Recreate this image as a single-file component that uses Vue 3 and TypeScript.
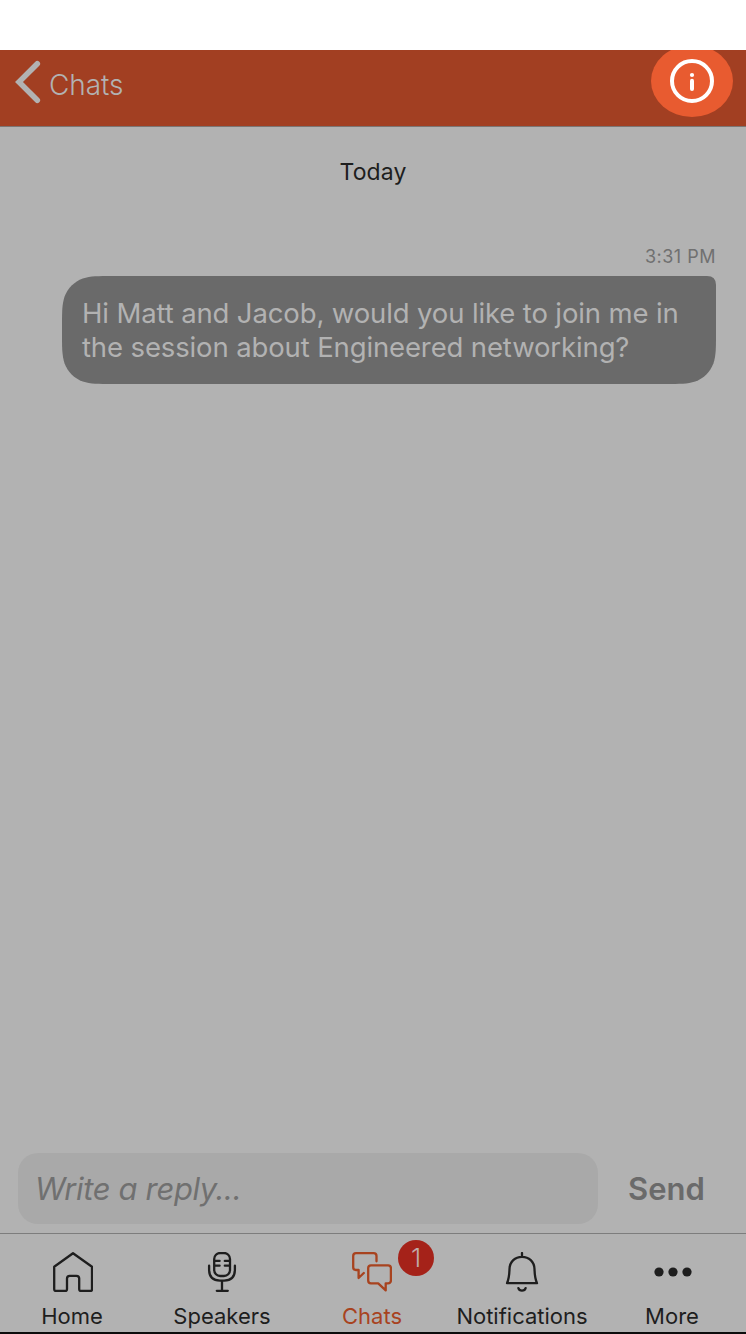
<script setup lang="ts">
import { ref } from 'vue'

interface Tab {
  id: string
  label: string
  badge?: number
}

const tabs: Tab[] = [
  { id: 'home', label: 'Home' },
  { id: 'speakers', label: 'Speakers' },
  { id: 'chats', label: 'Chats', badge: 1 },
  { id: 'notifications', label: 'Notifications' },
  { id: 'more', label: 'More' },
]
const active = ref('chats')
const reply = ref('')
</script>

<template>
  <div class="screen">
    <header class="header">
      <button class="back">
        <svg class="chevron" width="28" height="46" viewBox="0 0 28 46">
          <path d="M23.3 4.8 L5 23 L23.3 41.2" />
        </svg>
        <span>Chats</span>
      </button>
      <button class="info" aria-label="Info">
        <svg width="82" height="72" viewBox="0 0 82 72">
          <ellipse class="spot" cx="41" cy="36" rx="41" ry="36" />
          <circle class="ring" cx="41" cy="36" r="20" />
          <circle class="dot" cx="41" cy="30" r="2.1" />
          <path class="stem" d="M41 35.7V44" />
        </svg>
      </button>
    </header>

    <main class="thread">
      <div class="day">Today</div>
      <div class="time">3:31 PM</div>
      <div class="bubble">
        <svg class="shape" width="654" height="108" viewBox="0 0 654 108">
          <path
            d="M50.4 0H645Q654 0 654 9V57.6C654 72.1 654 79.3 651.5 87.2C648.4 95.7 641.7 102.4 633.2 105.5C625.3 108 618.1 108 603.6 108H50.4C35.9 108 28.7 108 20.8 105.5C12.3 102.4 5.6 95.7 2.5 87.2C0 79.3 0 72.1 0 57.6V50.4C0 35.9 0 28.7 2.5 20.8C5.6 12.3 12.3 5.6 20.8 2.5C28.7 0 35.9 0 50.4 0Z"
          />
        </svg>
        <p class="message">
          <span class="line">Hi Matt and Jacob, would you like to join me in</span>
          <span class="line">the session about Engineered networking?</span>
        </p>
      </div>
    </main>

    <form class="composer" @submit.prevent>
      <input v-model="reply" class="field" type="text" placeholder="Write a reply..." />
      <button class="send">Send</button>
    </form>

    <nav class="tabs">
      <button
        v-for="tab in tabs"
        :key="tab.id"
        class="tab"
        :class="[tab.id, { active: tab.id === active }]"
        @click="active = tab.id"
      >
        <svg class="icon" width="40" height="40" viewBox="0 0 40 40">
          <path
            v-if="tab.id === 'home'"
            d="M20 1.2L1.2 14.8V37.3Q1.2 39 2.9 39H12.3Q14 39 14 37.3V26.5Q14 23.8 16.7 23.8H23.5Q26.2 23.8 26.2 26.5V37.3Q26.2 39 27.9 39H37.3Q39 39 39 37.3V14.8Z"
          />
          <template v-else-if="tab.id === 'speakers'">
            <rect x="12.2" y="1" width="15.8" height="23" rx="6" />
            <path d="M13 8.9H17.6M22.8 8.9H27.5M13 13.7H17.6M22.8 13.7H27.5" />
            <path d="M7.1 13.7V17.5Q7.1 28.6 18 28.6H22.2Q32.9 28.6 32.9 17.5V13.7M20 28.6V38.8M14.8 38.8H25.8" />
          </template>
          <path
            v-else-if="tab.id === 'chats'"
            d="M24.5 9.3V4Q24.5 1.2 21.7 1.2H4Q1.2 1.2 1.2 4V15.3Q1.2 18 4 18H6.6V26L11.8 21M19 13.3H36.1Q38.9 13.3 38.9 16.1V28.5Q38.9 31.3 36.1 31.3H33.7V38.4L26.2 31.3H19Q16.2 31.3 16.2 28.5V16.1Q16.2 13.3 19 13.3Z"
          />
          <path
            v-else-if="tab.id === 'notifications'"
            d="M20 1V4.6M5 31.2C7.3 26 7.3 22.5 7.5 17C7.8 9.5 13 4.8 20 4.8C27 4.8 32.2 9.5 32.5 17C32.7 22.5 32.7 26 35 31.2ZM16.4 36.2C17.4 39.4 22.6 39.4 23.6 36.2"
          />
          <g v-else class="dots">
            <circle cx="6" cy="20" r="4.6" />
            <circle cx="20" cy="20" r="4.6" />
            <circle cx="34" cy="20" r="4.6" />
          </g>
        </svg>
        <span class="label">{{ tab.label }}</span>
        <span v-if="tab.badge" class="badge">{{ tab.badge }}</span>
      </button>
    </nav>
  </div>
</template>

<style>
body {
  margin: 0;
  background: #fff;
}
</style>

<style scoped>
.screen {
  box-sizing: border-box;
  width: 746px;
  height: 1334px;
  padding-top: 50px;
  display: flex;
  flex-direction: column;
  overflow: hidden;
  font-family: Inter, "Liberation Sans", sans-serif;
  color: #1e1e1e;
  border-bottom: 2px solid #0c0c0c;
}
button {
  border: 0;
  padding: 0;
  margin: 0;
  background: none;
  font: inherit;
  color: inherit;
}
.header {
  box-sizing: border-box;
  flex: none;
  height: 77px;
  display: flex;
  justify-content: space-between;
  background: #a23f22;
  border-bottom: 1px solid #7c7573;
  overflow: hidden;
}
.back {
  display: flex;
  align-items: flex-start;
  padding: 9px 0 0 14px;
  color: #b2b2b2;
  font-size: 28px;
  line-height: 34px;
  font-weight: 300;
  letter-spacing: -0.1px;
}
.back span {
  margin: 9px 0 0 7px;
}
.chevron {
  fill: none;
  stroke: #b2b2b2;
  stroke-width: 5.6;
  stroke-linecap: round;
}
.info {
  height: 72px;
  margin: -5px 13px 0 0;
}
.info svg {
  display: block;
}
.spot {
  fill: #e85b30;
}
.ring {
  fill: none;
  stroke: #fff;
  stroke-width: 4;
}
.dot {
  fill: #fff;
}
.stem {
  stroke: #fff;
  stroke-width: 4;
  stroke-linecap: round;
}
.thread {
  flex: 1;
  display: flex;
  flex-direction: column;
  background: #b2b2b2;
}
.day {
  margin-top: 30px;
  height: 30px;
  line-height: 30px;
  text-align: center;
  font-size: 23px;
  letter-spacing: 0.1px;
}
.time {
  margin: 59px 30px 0 0;
  height: 22px;
  line-height: 22px;
  text-align: right;
  font-size: 18px;
  letter-spacing: 0.5px;
  color: #707070;
}
.bubble {
  position: relative;
  box-sizing: border-box;
  width: 654px;
  height: 108px;
  margin: 8px 0 0 62px;
  padding: 20px 20px 0;
}
.shape {
  position: absolute;
  inset: 0;
  fill: #6a6a6a;
}
.message {
  position: relative;
  margin: 0;
  font-size: 27.5px;
  line-height: 34px;
  letter-spacing: -0.13px;
  color: #b2b2b2;
  white-space: nowrap;
}
.line {
  display: block;
}
.composer {
  flex: none;
  display: flex;
  height: 71px;
  padding: 0 0 9px 18px;
  background: #b2b2b2;
}
.field {
  box-sizing: border-box;
  width: 580px;
  height: 71px;
  border: 0;
  outline: 0;
  border-radius: 20px;
  padding: 0 17px;
  background: #a9a9a9;
  font: italic 31px Inter, "Liberation Sans", sans-serif;
  letter-spacing: -0.35px;
  color: #1e1e1e;
}
.field::placeholder {
  color: #707070;
  opacity: 1;
}
.send {
  width: 137px;
  color: #6a6a6a;
  font-size: 31px;
  font-weight: 600;
}
.tabs {
  box-sizing: border-box;
  flex: none;
  width: 752px;
  height: 99px;
  padding: 0 2px 0 0;
  margin-left: -3px;
  display: grid;
  grid-template-columns: repeat(5, 150px);
  background: #b2b2b2;
  border-top: 1px solid #7d7d7d;
}
.tab {
  position: relative;
  display: flex;
  flex-direction: column;
  align-items: center;
  padding-top: 18px;
}
.icon {
  display: block;
  fill: none;
  stroke: currentColor;
  stroke-width: 2.3;
  stroke-linecap: round;
  stroke-linejoin: round;
}
.home .icon,
.more .icon {
  margin-left: 2px;
}
.dots {
  fill: currentColor;
  stroke: none;
}
.label {
  margin-top: 10px;
  font-size: 22px;
  line-height: 28px;
  letter-spacing: 0;
}
.active {
  color: #a8431f;
}
.badge {
  position: absolute;
  left: 101px;
  top: 6px;
  width: 36px;
  height: 36px;
  border-radius: 50%;
  background: #a52219;
  color: #c0aaa8;
  font-size: 26px;
  line-height: 36px;
  text-align: center;
  font-weight: 300;
}
</style>
